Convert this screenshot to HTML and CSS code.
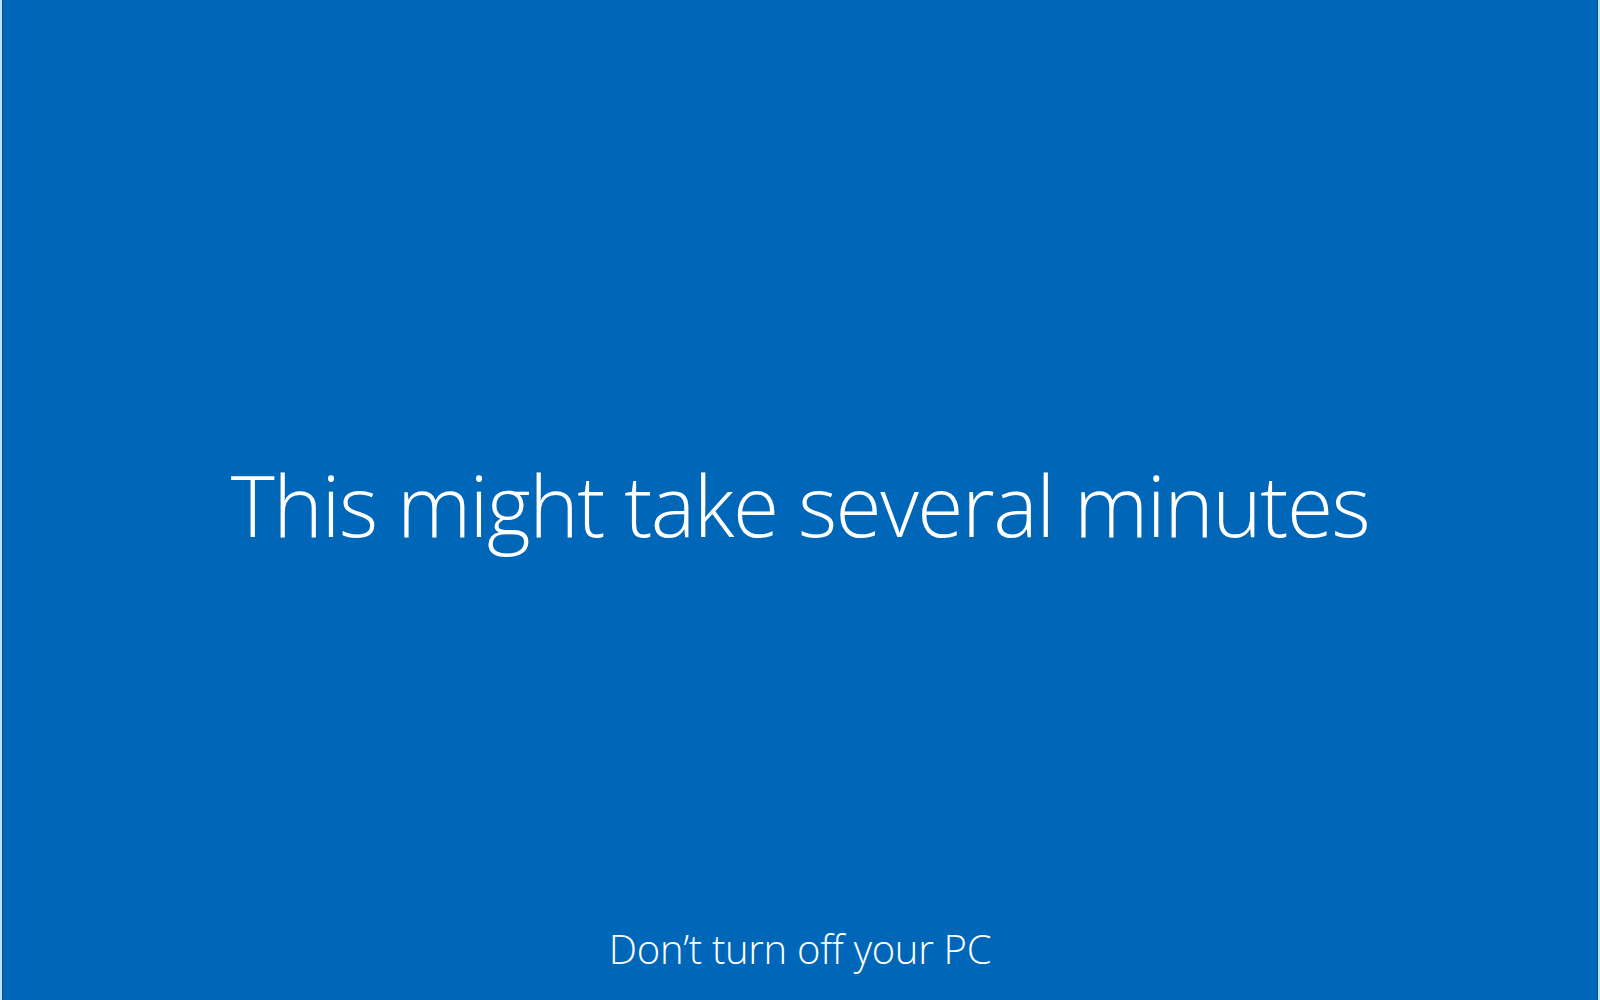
FILE: index.html
```html
<!DOCTYPE html>
<html lang="en">
<head>
    <meta charset="UTF-8">
    <meta name="viewport" content="width=device-width, initial-scale=1.0">
    <title>Working on updates</title>
    <link rel="stylesheet" href="styles.css">
</head>
<body>

    <div class="screen">
        <div class="message">
            <h1>This might take several minutes</h1>
        </div>
        <p class="warning">Don’t turn off your PC</p>
    </div>

</body>
</html>
```

FILE: styles.css
```css
* {
    margin: 0;
    padding: 0;
    box-sizing: border-box;
}
html, body {
    height: 100%;
}
body {
    background-color: #b9e6f4;
    padding: 0 2px;
    font-family: "Open Sans", "Noto Sans", sans-serif;
    color: #ffffff;
}
.screen {
    height: 100%;
    background-color: #0067b8;
    border-left: 1px solid #0a4f8f;
    border-right: 1px solid #0a4f8f;
    display: flex;
    flex-direction: column;
    align-items: center;
}
.message {
    flex: 1;
    display: flex;
    align-items: center;
    justify-content: center;
    padding-top: 88px;
}
h1 {
    font-weight: 300;
    font-size: 84px;
    letter-spacing: -1.5px;
}
.warning {
    font-weight: 300;
    font-size: 40px;
    letter-spacing: -0.3px;
    padding-bottom: 24px;
}
```
